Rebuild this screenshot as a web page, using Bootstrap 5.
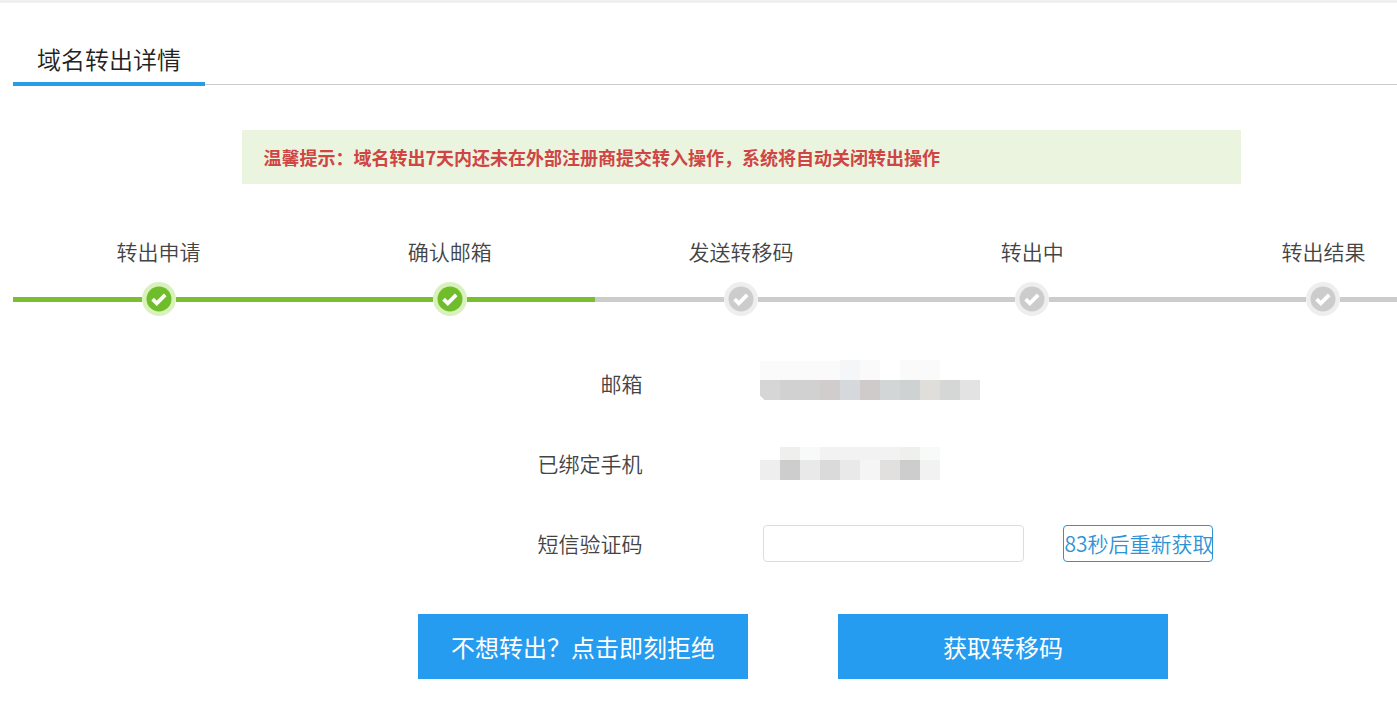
<!DOCTYPE html>
<html lang="zh-CN">
<head>
<meta charset="utf-8">
<meta name="viewport" content="width=device-width, initial-scale=1">
<title>域名转出详情</title>
<link href="https://cdn.jsdelivr.net/npm/bootstrap@5.3.0/dist/css/bootstrap.min.css" rel="stylesheet">
<style>
  body { font-family: "Noto Sans CJK SC", sans-serif; font-size: 21px; font-weight: 350; line-height: 32px; color: #444; border-top: 3px solid #f0f0f0; }
  /* the panel runs on past the right edge of the window */
  .panel { margin-left: 13px; margin-right: -72px; }
  .tabs { border-bottom: 1px solid #ccc; padding-top: 37px; }
  .tabs .nav-link { font-size: 24px; line-height: 38px; color: #222; padding: 0 24px 4px; border-bottom: 4px solid #289de6; margin-bottom: -2px; border-radius: 0; }
  .content { max-width: 999px; }
  .tip { background: #eaf4de; color: #d04444; font-size: 18px; line-height: 28px; padding: 13px 22px; margin-top: 45px; }
  .steps { margin-top: 51px; }
  .step-track { height: 34px; margin-top: 15px; --line: #ccc; }
  .step-track::before, .step-track::after { content: ""; flex: 1; height: 5px; background: var(--line); }
  .done .step-track { --line: #79bf30; }
  .step-track svg { width: 34px; height: 34px; }
  .fields { margin-top: 44px; }
  .field { min-height: 80px; }
  .field-name { flex: 0 0 401px; text-align: right; margin-right: 117px; line-height: 46px; }
  .phone-mask { margin-top: 7px; }
  .code-box, .resend { height: 37px; margin-top: 5px; border-radius: 4px; font-size: 21px; }
  .code-box { width: 261px; border: 1px solid #ddd; margin-left: 3px; }
  .resend { width: 150px; margin-left: 39px; padding: 0 1px; border: 1px solid #2b93d6; color: #2b93d6; background: #fff; line-height: 35px; white-space: nowrap; overflow: hidden; text-align: left; font-weight: inherit; }
  .actions { gap: 90px; padding-left: 104px; margin-top: 14px; }
  .action { width: 330px; height: 65px; border: 0; border-radius: 0; background: #269cf0; color: #fff; font-size: 24px; font-weight: 400; }
</style>
</head>
<body>
<svg class="d-none" aria-hidden="true">
  <symbol id="tick" viewBox="0 0 34 34">
    <path d="M10.6 17.2l4.2 4.1 8.4-8.4" fill="none" stroke="#fff" stroke-width="3.8"/>
  </symbol>
</svg>

<div class="overflow-hidden">
<main class="panel">
  <nav class="nav tabs"><a class="nav-link" href="#" aria-current="page">域名转出详情</a></nav>

  <div class="content mx-auto">
    <div class="tip fw-bold" role="alert">温馨提示：域名转出7天内还未在外部注册商提交转入操作，系统将自动关闭转出操作</div>
  </div>

  <ol class="steps list-unstyled d-flex mb-0 text-center">
    <li class="col done">转出申请
      <div class="step-track d-flex align-items-center"><svg viewBox="0 0 34 34"><circle cx="17" cy="17" r="17" fill="#d9f2bd"/><circle cx="17" cy="17" r="12.5" fill="#70bd2b"/><use href="#tick"/></svg></div>
    </li>
    <li class="col done">确认邮箱
      <div class="step-track d-flex align-items-center"><svg viewBox="0 0 34 34"><circle cx="17" cy="17" r="17" fill="#d9f2bd"/><circle cx="17" cy="17" r="12.5" fill="#70bd2b"/><use href="#tick"/></svg></div>
    </li>
    <li class="col">发送转移码
      <div class="step-track d-flex align-items-center"><svg viewBox="0 0 34 34"><circle cx="17" cy="17" r="17" fill="#eee"/><circle cx="17" cy="17" r="12.5" fill="#ccc"/><use href="#tick"/></svg></div>
    </li>
    <li class="col">转出中
      <div class="step-track d-flex align-items-center"><svg viewBox="0 0 34 34"><circle cx="17" cy="17" r="17" fill="#eee"/><circle cx="17" cy="17" r="12.5" fill="#ccc"/><use href="#tick"/></svg></div>
    </li>
    <li class="col">转出结果
      <div class="step-track d-flex align-items-center"><svg viewBox="0 0 34 34"><circle cx="17" cy="17" r="17" fill="#eee"/><circle cx="17" cy="17" r="12.5" fill="#ccc"/><use href="#tick"/></svg></div>
    </li>
  </ol>

  <form class="content mx-auto">
    <div class="fields">
      <div class="field d-flex">
        <span class="field-name">邮箱</span>
        <svg width="220" height="40" shape-rendering="crispEdges" role="img" aria-label="已隐藏的邮箱">
          <path fill="#fafafa" d="M0 1h80v19H0zM100 0h20v20h-20zM140 0h40v20h-40z"/>
          <path fill="#f4f6f7" d="M80 0h20v20H80z"/>
          <path fill="#d6d6d6" d="M0 20h20v20H4l-4-5z"/>
          <path fill="#d1d1d1" d="M20 20h40v20H20z"/>
          <path fill="#d0cdcc" d="M60 20h20v20H60z"/>
          <path fill="#d5d9db" d="M80 20h20v20H80z"/>
          <path fill="#cecbca" d="M100 20h20v20h-20z"/>
          <path fill="#d3d6d6" d="M120 20h20v20h-20z"/>
          <path fill="#ced2d3" d="M140 20h20v20h-20z"/>
          <path fill="#e0deda" d="M160 20h20v20h-20z"/>
          <path fill="#d5d7d6" d="M180 20h20v20h-20z"/>
          <path fill="#e3e3e3" d="M200 20h20v20h-20z"/>
        </svg>
      </div>
      <div class="field d-flex">
        <span class="field-name">已绑定手机</span>
        <svg class="phone-mask" width="180" height="33" shape-rendering="crispEdges" role="img" aria-label="已隐藏的手机号">
          <path fill="#efefee" d="M20 0h20v13H20zM140 0h20v13h-20z"/>
          <path fill="#f8faf9" d="M40 0h20v13H40zM160 0h20v13h-20z"/>
          <path fill="#f2f2f2" d="M60 0h80v13H60z"/>
          <path fill="#eee" d="M0 13h20v20H0z"/>
          <path fill="#cdcdcd" d="M20 13h20v20H20zM140 13h20v20h-20z"/>
          <path fill="#e9e9e9" d="M40 13h20v20H40zM80 13h20v20H80z"/>
          <path fill="#dadada" d="M60 13h20v20H60z"/>
          <path fill="#f5f5f5" d="M100 13h20v20h-20z"/>
          <path fill="#e2e0df" d="M120 13h20v20h-20z"/>
          <path fill="#f2f2f2" d="M160 13h20v20h-20z"/>
        </svg>
      </div>
      <div class="field d-flex">
        <label class="field-name" for="code">短信验证码</label>
        <input class="code-box px-2" id="code" type="text">
        <button class="resend" type="button">83秒后重新获取</button>
      </div>
    </div>
    <div class="actions d-flex justify-content-center">
      <button class="action" type="button">不想转出？点击即刻拒绝</button>
      <button class="action" type="submit">获取转移码</button>
    </div>
  </form>
</main>
</div>
<script src="https://cdn.jsdelivr.net/npm/bootstrap@5.3.0/dist/js/bootstrap.bundle.min.js"></script>
</body>
</html>
